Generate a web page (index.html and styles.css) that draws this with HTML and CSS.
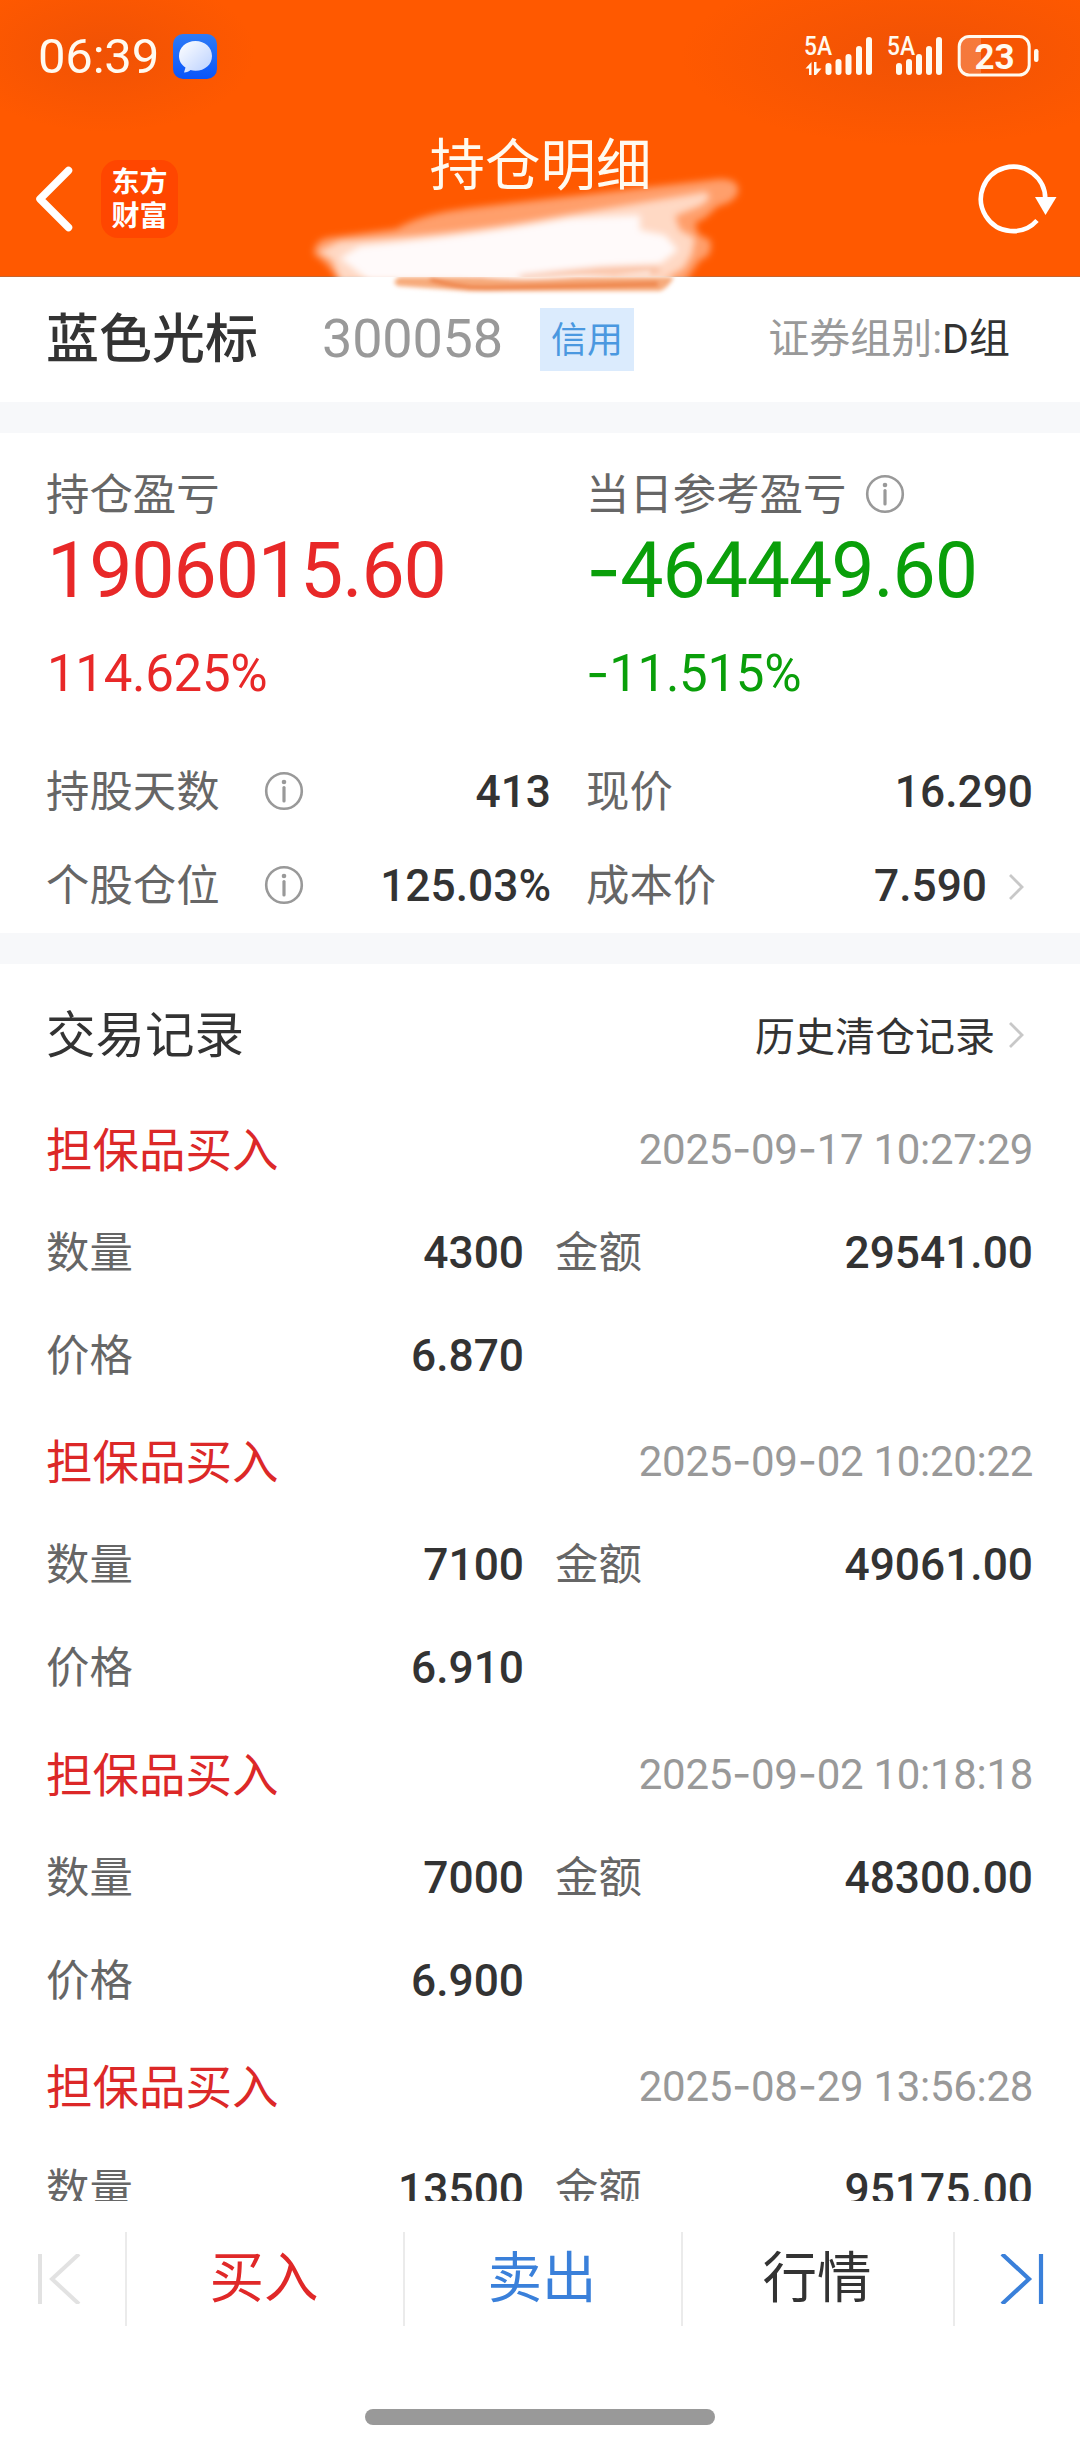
FILE: index.html
```html
<!DOCTYPE html>
<html lang="zh-CN">
<head>
<meta charset="utf-8">
<title>持仓明细</title>
<link rel="stylesheet" href="styles.css">
</head>
<body>
<div class="page">
  <header class="header">
    <div class="status">
      <div class="status-left">
        <span class="clock">06:39</span>
        <svg class="msg" width="44" height="45" viewBox="0 0 44 45">
          <defs>
            <linearGradient id="blue" x1="0" y1="0" x2="0" y2="1"><stop offset="0" stop-color="#2e7bf6"/><stop offset="1" stop-color="#0a55fa"/></linearGradient>
            <linearGradient id="bubble" x1="0" y1="0" x2="1" y2="1"><stop offset="0" stop-color="#ffffff"/><stop offset="1" stop-color="#b9d0ff"/></linearGradient>
          </defs>
          <rect width="44" height="45" rx="10" fill="url(#blue)"/>
          <path d="M22.500 7C13 7 6 13.500 6 22c0 5 2.500 9 6.500 11.500L11 38.500c3 0 5-1 6.500-2.500 1.600.6 3.300.8 5 .8C32 36.800 39 30.500 39 22S32 7 22.500 7z" fill="url(#bubble)"/>
        </svg>
      </div>
      <svg class="status-right" width="240" height="46" viewBox="800 34 240 46">
        <g fill="#fffaf0">
          <text class="net" x="804" y="56" textLength="28" lengthAdjust="spacingAndGlyphs">5A</text>
          <path d="M809 76V69.500H805.500L811.500 63V76zM814 63h2.500v6.500H821.500L816 76h-2z"/>
          <rect x="825.500" y="64" width="6" height="12" rx="3"/>
          <rect x="835.500" y="60" width="6" height="16" rx="3"/>
          <rect x="845.500" y="55" width="6" height="21" rx="3"/>
          <rect x="856" y="47" width="6" height="29" rx="3"/>
          <rect x="866" y="38" width="6" height="38" rx="3"/>
          <text class="net" x="887" y="56" textLength="28" lengthAdjust="spacingAndGlyphs">5A</text>
          <rect x="896" y="64" width="6" height="12" rx="3"/>
          <rect x="906" y="60" width="6" height="16" rx="3"/>
          <rect x="916" y="55" width="6" height="21" rx="3"/>
          <rect x="926" y="47" width="6" height="29" rx="3"/>
          <rect x="936" y="38" width="6" height="38" rx="3"/>
          <rect x="1034" y="50" width="4.500" height="13" rx="2.200"/>
          <text class="batt" x="994.500" y="70" text-anchor="middle">23</text>
        </g>
        <path d="M981 39h-12q-9 0-9 9v17q0 9 9 9h12z" fill="#fff" fill-opacity=".22"/>
        <rect x="959.200" y="37.500" width="70" height="38.500" rx="10" fill="none" stroke="#fffaf0" stroke-width="3"/>
      </svg>
    </div>
    <div class="nav">
      <div class="nav-left">
        <svg width="40" height="68" viewBox="0 0 40 68"><path d="M34.500 5.500 6 34 34.500 62.500" fill="none" stroke="#fff" stroke-width="7.500" stroke-linecap="round" stroke-linejoin="round"/></svg>
        <div class="logo">东方<br>财富</div>
      </div>
      <h1 class="title">持仓明细</h1>
      <svg class="refresh" width="80" height="74" viewBox="976 162 80 74">
        <path d="M1036 219.500A32.200 32.200 0 1 1 1044.300 198" fill="none" stroke="#fff" stroke-width="4.600"/>
        <path d="M1034 196h21.500L1044.500 214z" fill="#fff"/>
      </svg>
    </div>
    <svg class="smear" width="500" height="190" viewBox="0 0 500 190" aria-hidden="true">
      <defs>
        <filter id="soft" x="-10%" y="-20%" width="120%" height="140%"><feGaussianBlur stdDeviation="3.500"/></filter>
        <filter id="soft2" x="-10%" y="-60%" width="120%" height="220%"><feGaussianBlur stdDeviation="2.200"/></filter>
        <clipPath id="bar"><rect width="500" height="167"/></clipPath>
      </defs>
      <g filter="url(#soft2)">
        <path d="M120 167H394Q388 178 380 181L190 181 118 176 Q110 172 120 167z" fill="#f7ab7c"/>
        <path d="M150 169Q180 179 210 178L378 174" fill="none" stroke="#ee8347" stroke-width="5"/>
        <path d="M180 164Q240 176 370 160V164z" fill="#fff4ec"/>
      </g>
      <g clip-path="url(#bar)">
        <g filter="url(#soft)">
          <path d="M116 119Q140 104 190 98L440 69Q460 69 458 82 455 92 438 96L425 108 415 113 418 124 430 130Q434 146 420 150L405 172H60Q50 158 44 152L34 144Q34 128 54 127z" fill="#fff" fill-opacity=".42"/>
          <path d="M60 131Q180 125 280 106L425 82Q436 86 420 96L395 106 400 120 415 128 412 144 404 158 380 172H60L52 150 38 142z" fill="#fff" fill-opacity=".6"/>
          <path d="M80 136Q190 126 290 108L360 105 360 120 385 125 398 140 380 154 320 157 210 172H90L60 148z" fill="#fffafa"/>
          <path d="M240 168Q320 158 380 160" fill="none" stroke="#f28a4e" stroke-opacity=".5" stroke-width="5"/>
        </g>
      </g>
    </svg>
  </header>

  <main class="content">
    <section class="stock">
      <span class="stock-name">蓝色光标</span>
      <span class="stock-code">300058</span>
      <span class="badge">信用</span>
      <span class="group">证券组别:<b>D组</b></span>
    </section>

    <section class="summary">
      <div class="profit">
        <div class="col up">
          <div class="label">持仓盈亏</div>
          <div class="big">1906015.60</div>
          <div class="pct">114.625%</div>
        </div>
        <div class="col down">
          <div class="label">当日参考盈亏<svg class="info" width="40" height="40" viewBox="0 0 40 40"><use href="#i"/></svg></div>
          <div class="big"><span class="dash">-</span>464449.60</div>
          <div class="pct"><span class="dash">-</span>11.515%</div>
        </div>
      </div>
      <div class="stats">
        <div class="stat"><span class="label">持股天数<svg class="info" width="40" height="40" viewBox="0 0 40 40"><g id="i"><circle cx="20" cy="20" r="17.800" fill="none" stroke="#999" stroke-width="2.600"/><circle cx="20" cy="11" r="2.300" fill="#999"/><path d="M20 16.500V30" stroke="#999" stroke-width="3.200" stroke-linecap="round"/></g></svg></span><span class="num">413</span></div>
        <div class="stat"><span class="label">现价</span><span class="num">16.290</span></div>
        <div class="stat"><span class="label">个股仓位<svg class="info" width="40" height="40" viewBox="0 0 40 40"><use href="#i"/></svg></span><span class="num">125.03%</span></div>
        <div class="stat"><span class="label">成本价</span><span class="num">7.590<svg class="more" width="16" height="28" viewBox="0 0 16 28"><path id="chev" d="M2 2 14 14 2 26" fill="none" stroke="#c8c8c8" stroke-width="2.800"/></svg></span></div>
      </div>
    </section>

    <section class="records">
      <div class="records-head">
        <h2>交易记录</h2>
        <span class="history">历史清仓记录<svg class="more" width="16" height="28" viewBox="0 0 16 28"><use href="#chev"/></svg></span>
      </div>
      <article class="record">
        <div class="record-top"><span class="type">担保品买入</span><time>2025<i class="dash">-</i>09<i class="dash">-</i>17 10:27:29</time></div>
        <div class="cells"><span class="label">数量</span><span class="num">4300</span><span class="label">金额</span><span class="num">29541.00</span></div>
        <div class="cells"><span class="label">价格</span><span class="num">6.870</span></div>
      </article>
      <article class="record">
        <div class="record-top"><span class="type">担保品买入</span><time>2025<i class="dash">-</i>09<i class="dash">-</i>02 10:20:22</time></div>
        <div class="cells"><span class="label">数量</span><span class="num">7100</span><span class="label">金额</span><span class="num">49061.00</span></div>
        <div class="cells"><span class="label">价格</span><span class="num">6.910</span></div>
      </article>
      <article class="record">
        <div class="record-top"><span class="type">担保品买入</span><time>2025<i class="dash">-</i>09<i class="dash">-</i>02 10:18:18</time></div>
        <div class="cells"><span class="label">数量</span><span class="num">7000</span><span class="label">金额</span><span class="num">48300.00</span></div>
        <div class="cells"><span class="label">价格</span><span class="num">6.900</span></div>
      </article>
      <article class="record">
        <div class="record-top"><span class="type">担保品买入</span><time>2025<i class="dash">-</i>08<i class="dash">-</i>29 13:56:28</time></div>
        <div class="cells"><span class="label">数量</span><span class="num">13500</span><span class="label">金额</span><span class="num">95175.00</span></div>
      </article>
    </section>
  </main>

  <footer class="footer">
    <nav class="actions">
      <span class="prev"><svg width="44" height="50" viewBox="0 0 44 50"><path d="M2 0V50M41 0 14 25 41 50" fill="none" stroke="#e2e2e2" stroke-width="4"/></svg></span>
      <span class="buy">买入</span>
      <span class="sell">卖出</span>
      <span class="quote">行情</span>
      <span class="next"><svg width="44" height="50" viewBox="0 0 44 50"><path d="M41 0V50M2 0 29 25 2 50" fill="none" stroke="#3a80da" stroke-width="4.200"/></svg></span>
    </nav>
    <div class="home"></div>
  </footer>
</div>
</body>
</html>
```
FILE: styles.css
```css
* { box-sizing: border-box; }

body {
  margin: 0;
  background: #fff;
  color: #333;
  font-family: "Noto Sans CJK SC", sans-serif;
}

h1, h2 { margin: 0; font-weight: 400; }
b { font-weight: 400; }
svg { display: block; flex: none; }

.page {
  width: 1080px;
  height: 2444px;
  display: flex;
  flex-direction: column;
  overflow: hidden;
}

/* header */
.header {
  position: relative;
  z-index: 1;
  flex: none;
  height: 277px;
  background:
    radial-gradient(ellipse 150px 80px at 105px 52px, rgba(225, 75, 10, .5), transparent),
    radial-gradient(ellipse 240px 90px at 920px 56px, rgba(225, 75, 10, .5), transparent),
    #ff5900;
  color: #fff;
  border-bottom: 1px solid #c8642c;
}

.status {
  height: 112px;
  padding: 0 40px 0 38px;
  display: flex;
  justify-content: space-between;
  align-items: center;
}
.status-left { display: flex; align-items: center; gap: 12px; }
.status-right { overflow: visible; }
.clock { font: 400 49px/110px Roboto, sans-serif; width: 123px; padding-top: 2px; color: #fffaf0; letter-spacing: -.2px; }
.net { font: 500 26px Roboto, sans-serif; }
.batt { font: 700 35px Roboto, sans-serif; }

.nav {
  height: 164px;
  padding: 0 23px 0 34px;
  display: grid;
  grid-template-columns: 1fr 230px 1fr;
}
.nav-left { display: flex; gap: 27px; padding-top: 53px; }
.logo {
  width: 77px;
  height: 78px;
  margin-top: -5px;
  padding-top: 3px;
  border-radius: 17px;
  background: #ff4600;
  font-weight: 700;
  font-size: 28px;
  line-height: 34px;
  text-align: center;
}
.title {
  margin-left: -10px;
  font-size: 55.500px;
  line-height: 98px;
  text-align: center;
  white-space: nowrap;
  color: #fffaf0;
}
.refresh { justify-self: end; margin-top: 51px; }
.smear { position: absolute; left: 280px; top: 110px; }

/* stock line */
.content { flex: 1; min-height: 0; overflow: hidden; }

.stock {
  height: 125px;
  padding: 0 70px 1px 46px;
  display: flex;
  align-items: center;
}
.stock-name { width: 276px; font-size: 53px; line-height: 60px; font-weight: 500; margin-top: -8px; }
.stock-code { width: 218px; font: 400 54px/60px Roboto, sans-serif; letter-spacing: -.2px; color: #999; }
.badge {
  width: 94px;
  height: 63px;
  background: #dbebfd;
  color: #4a98e0;
  font-size: 36px;
  line-height: 59px;
  text-align: center;
}
.group { margin: 0 0 0 auto; font-family: Roboto, "Noto Sans CJK SC", sans-serif; font-size: 41px; line-height: 60px; color: #999; }
.group b { color: #333; }

/* summary */
.summary {
  height: 562px;
  padding: 30px 47px 0 46px;
  border: solid #f7f8fa;
  border-width: 31px 0;
}
.label { display: flex; align-items: center; font-size: 43.400px; line-height: 56px; padding-bottom: 4px; color: #666; }
.num { display: flex; align-items: center; font: 500 44.300px/56px Roboto, sans-serif; padding-top: 4px; color: #333; }
.dash { font-family: Inter, sans-serif; font-style: normal; line-height: 0; }

.profit { display: grid; grid-template-columns: 540px 1fr; }
.info { margin-top: 5px; }
.profit .info { margin-left: 19px; }
.big { padding-top: 3px; font: 400 77px/90px Roboto, sans-serif; letter-spacing: -1.100px; }
.pct { margin-top: 13px; font: 400 51px/90px Roboto, sans-serif; letter-spacing: -.3px; }
.up .big, .up .pct { color: #e82828; }
.up .big, .up .pct { margin-left: 1px; }
.down .big, .down .pct { color: #0a9f0a; }

.stats {
  display: grid;
  grid-template-columns: 505px 447px;
  column-gap: 35px;
  row-gap: 34px;
  margin-top: 41px;
}
.stat { display: flex; justify-content: space-between; }
.stat .info { margin-left: 44px; }
.more { margin: 2px 9px 0 21px; }

/* records */
.records { padding: 22px 47px 0 46px; }
.records-head { height: 96px; display: flex; justify-content: space-between; align-items: center; }
h2 { font-size: 49.500px; line-height: 70px; padding-bottom: 4px; }
.history { display: flex; align-items: center; font-size: 40px; }
.history .more { margin-left: 13px; }

.record { height: 312.300px; padding-top: 36px; }
.record-top { display: flex; justify-content: space-between; align-items: center; height: 60px; }
.type { font-size: 46.500px; line-height: 57px; padding-bottom: 3px; color: #dc2828; }
time { font: 400 42px/56px Roboto, sans-serif; padding-top: 4px; letter-spacing: -.3px; color: #999; }
.cells {
  display: grid;
  grid-template-columns: 131px 347px 130px 379px;
  margin-top: 43px;
}
.cells .num { justify-content: flex-end; }
.cells .label:nth-child(3) { padding-left: 31px; }

/* footer */
.footer { flex: none; height: 243px; background: #fff; }
.actions {
  height: 125px;
  padding-top: 31px;
  display: grid;
  grid-template-columns: 127px 278px 278px 272px 125px;
}
.actions > span {
  display: flex;
  justify-content: center;
  align-items: center;
  height: 94px;
  font-size: 54.500px;
  line-height: 84px;
  padding: 0 2px 10px 0;
  border-right: 2px solid #ebebeb;
}
.actions > .next { border: 0; padding: 0 36px 0 0; justify-content: flex-end; }
.actions > .prev { justify-content: flex-start; padding: 0 0 0 38px; }
.buy { color: #e02828; }
.sell { color: #3a80da; }
.home { width: 350px; height: 16px; margin: 83px auto 0; border-radius: 8px; background: #999; }
```
